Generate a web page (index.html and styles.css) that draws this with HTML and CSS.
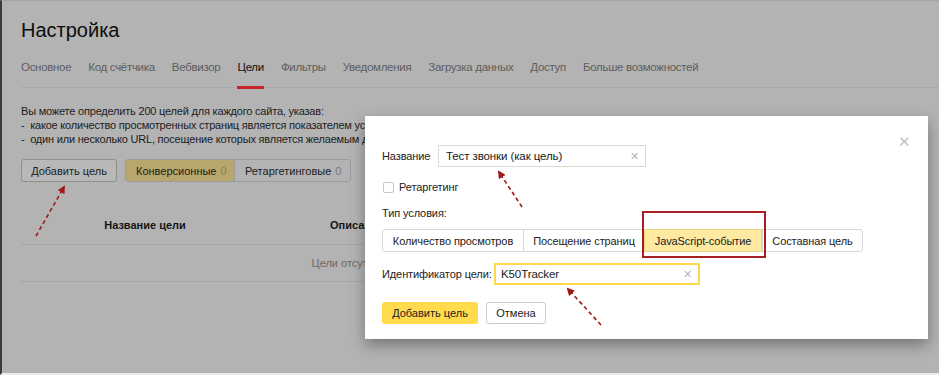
FILE: index.html
```html
<!DOCTYPE html>
<html lang="ru">
<head>
    <meta charset="UTF-8">
    <title>Настройка</title>
    <link rel="stylesheet" href="styles.css">
</head>
<body>
    <div class="page">
        <h1 class="title">Настройка</h1>

        <nav class="tabs">
            <span class="tab">Основное</span>
            <span class="tab">Код счётчика</span>
            <span class="tab">Вебвизор</span>
            <span class="tab active">Цели</span>
            <span class="tab">Фильтры</span>
            <span class="tab">Уведомления</span>
            <span class="tab">Загрузка данных</span>
            <span class="tab">Доступ</span>
            <span class="tab">Больше возможностей</span>
        </nav>

        <div class="intro">
            <div>Вы можете определить 200 целей для каждого сайта, указав:</div>
            <div>-&nbsp; какое количество просмотренных страниц является показателем успешности визита;</div>
            <div>-&nbsp; один или несколько URL, посещение которых является желаемым действием.</div>
        </div>

        <div class="toolbar">
            <button class="btn">Добавить цель</button>
            <div class="switch">
                <span class="switch-item on">Конверсионные <i>0</i></span>
                <span class="switch-item">Ретаргетинговые <i>0</i></span>
            </div>
        </div>

        <div class="goals">
            <div class="goals-head">
                <span class="col-name">Название цели</span>
                <span class="col-desc">Описание</span>
            </div>
            <div class="goals-empty">Цели отсутствуют</div>
        </div>
    </div>

    <div class="modal">
        <span class="close">&#x2715;</span>

        <div class="row">
            <span class="label">Название</span>
            <div class="input name-input">Тест звонки (как цель)<span class="clear">&#x2715;</span></div>
        </div>

        <label class="check"><span class="box"></span>Ретаргетинг</label>

        <div class="cond-label">Тип условия:</div>
        <div class="cond">
            <span class="cond-item w1">Количество просмотров</span>
            <span class="cond-item w2">Посещение страниц</span>
            <span class="cond-item w3 on">JavaScript-событие</span>
            <span class="cond-item w4">Составная цель</span>
        </div>
        <div class="mark"></div>

        <div class="row id-row">
            <span class="label id-label">Идентификатор цели:</span>
            <div class="input id-input">K50Tracker<span class="clear">&#x2715;</span></div>
        </div>

        <div class="actions">
            <button class="btn-yellow">Добавить цель</button>
            <button class="btn-plain">Отмена</button>
        </div>
    </div>

    <svg class="arrows" width="939" height="375" viewBox="0 0 939 375">
        <defs>
            <marker id="head" markerWidth="8" markerHeight="8" refX="6" refY="4" orient="auto" markerUnits="userSpaceOnUse">
                <path d="M0,0 L8,4 L0,8 Z" fill="#9d1b1b"/>
            </marker>
        </defs>
        <line x1="36" y1="236" x2="64" y2="187" marker-end="url(#head)"/>
        <line x1="522" y1="207" x2="499" y2="172" marker-end="url(#head)"/>
        <line x1="601" y1="325" x2="568" y2="289" marker-end="url(#head)"/>
    </svg>
</body>
</html>
```

FILE: styles.css
```css
body {
    margin: 0;
    width: 939px;
    height: 375px;
    overflow: hidden;
    background: #b3b3b3;
    font-family: "Liberation Sans", Arial, sans-serif;
    color: #1e1e1e;
    position: relative;
    box-sizing: border-box;
    border-left: 2px solid #3a3a3a;
    border-top: 1px solid #a4a4a4;
    border-bottom: 2px solid #ececec;
}

.page {
    padding-left: 19px;
}

.title {
    margin: 17px 0 0;
    font-size: 20px;
    font-weight: normal;
    line-height: 24px;
    color: #0d0d0d;
}

.tabs {
    display: flex;
    gap: 17px;
    margin-top: 17px;
    border-bottom: 1px solid #a8a8a8;
    font-size: 11.5px;
    line-height: 16px;
    letter-spacing: -0.3px;
}

.tab {
    position: relative;
    padding-bottom: 12px;
    color: #5e5e5e;
}

.tab.active {
    color: #111;
}

.tab.active::after {
    content: "";
    position: absolute;
    left: 0;
    right: 0;
    bottom: -2px;
    height: 3px;
    background: #c8252b;
}

.intro {
    margin-top: 16px;
    font-size: 11px;
    line-height: 14px;
    letter-spacing: -0.2px;
    color: #1c1c1c;
    white-space: nowrap;
}

.toolbar {
    display: flex;
    gap: 8px;
    margin-top: 13px;
}

.btn {
    width: 96px;
    height: 23px;
    padding: 0;
    border: 1px solid #8f8f8f;
    border-radius: 3px;
    background: #b8b8b8;
    font: 11px "Liberation Sans", Arial, sans-serif;
    color: #1c1c1c;
}

.switch {
    display: flex;
    border: 1px solid #9c9c9c;
    border-radius: 3px;
    overflow: hidden;
}

.switch-item {
    display: flex;
    align-items: center;
    padding: 0 9px 0 10px;
    font-size: 11px;
    color: #1c1c1c;
}

.switch-item + .switch-item {
    border-left: 1px solid #9a9a9a;
}

.switch-item i {
    font-style: normal;
    margin-left: 4px;
    color: #7a7a7a;
}

.switch-item.on {
    background: #b8a76d;
    width: 89px;
}

.switch-item.on i {
    color: #8e7f4c;
}

.goals {
    width: 672px;
    margin-top: 36px;
    font-size: 11px;
}

.goals-head {
    display: flex;
    height: 26px;
    line-height: 14px;
    border-bottom: 1px solid #a5a5a5;
    font-weight: bold;
    color: #141414;
}

.col-name {
    width: 248px;
    text-align: center;
}

.col-desc {
    width: 176px;
    text-align: center;
}

.goals-empty {
    height: 36px;
    line-height: 36px;
    text-align: center;
    color: #6a6a6a;
    border-bottom: 1px solid #a5a5a5;
}

/* dialog */

.modal {
    position: absolute;
    left: 363px;
    top: 115px;
    width: 546px;
    height: 223px;
    padding-left: 17px;
    background: #fff;
    box-shadow: 0 6px 14px rgba(0, 0, 0, 0.35);
    font-size: 11px;
    letter-spacing: -0.1px;
    color: #222;
}

.close {
    position: absolute;
    right: 17px;
    top: 17px;
    font-size: 15px;
    color: #c4c4c4;
}

.row {
    display: flex;
    align-items: center;
}

.modal > .row:first-of-type {
    margin-top: 29px;
}

.label {
    width: 56px;
}

.input {
    position: relative;
    box-sizing: border-box;
    height: 22px;
    line-height: 20px;
    padding-left: 7px;
    border: 1px solid #d9d9d9;
    color: #1a1a1a;
}

.name-input {
    width: 208px;
    font-size: 11.5px;
}

.clear {
    position: absolute;
    right: 6px;
    top: 0;
    font-size: 11px;
    color: #b5b5b5;
}

.check {
    display: flex;
    align-items: center;
    margin-top: 14px;
    line-height: 12px;
}

.box {
    box-sizing: border-box;
    width: 11px;
    height: 11px;
    margin: 0 5px 0 1px;
    border: 1px solid #c8c8c8;
    border-radius: 2px;
}

.cond-label {
    margin-top: 13px;
    line-height: 14px;
}

.cond {
    display: flex;
    margin-top: 9px;
    width: max-content;
    border: 1px solid #d8d8d8;
    border-radius: 3px;
    height: 23px;
    box-sizing: border-box;
}

.cond-item {
    display: flex;
    align-items: center;
    justify-content: center;
    box-sizing: border-box;
    height: 21px;
}

.cond-item + .cond-item {
    border-left: 1px solid #d8d8d8;
}

.w1 { width: 140px; }
.w2 { width: 121px; }
.w3 { width: 118px; }
.w4 { width: 100px; }

.cond-item.on {
    background: #fee9a1;
    border: 1px solid #e9d586;
    margin: -1px 0;
    height: 23px;
}

.mark {
    position: absolute;
    left: 277px;
    top: 95px;
    width: 120px;
    height: 43px;
    border: 2px solid #a61e22;
}

.id-row {
    margin-top: 11px;
}

.id-label {
    width: 112px;
}

.id-input {
    width: 206px;
    height: 22px;
    border: 2px solid #fcd84a;
    line-height: 18px;
    padding-left: 5px;
    font-size: 11.5px;
}

.actions {
    display: flex;
    gap: 8px;
    margin-top: 17px;
}

.btn-yellow,
.btn-plain {
    height: 22px;
    border-radius: 3px;
    font: 11px "Liberation Sans", Arial, sans-serif;
    color: #222;
}

.btn-yellow {
    width: 96px;
    border: 0;
    background: #ffdb4d;
}

.btn-plain {
    width: 60px;
    border: 1px solid #ccc;
    background: #fff;
}

.arrows {
    position: absolute;
    left: -2px;
    top: -1px;
    pointer-events: none;
}

.arrows line {
    stroke: #9d1b1b;
    stroke-width: 1.6;
    stroke-dasharray: 4 3;
}
```
